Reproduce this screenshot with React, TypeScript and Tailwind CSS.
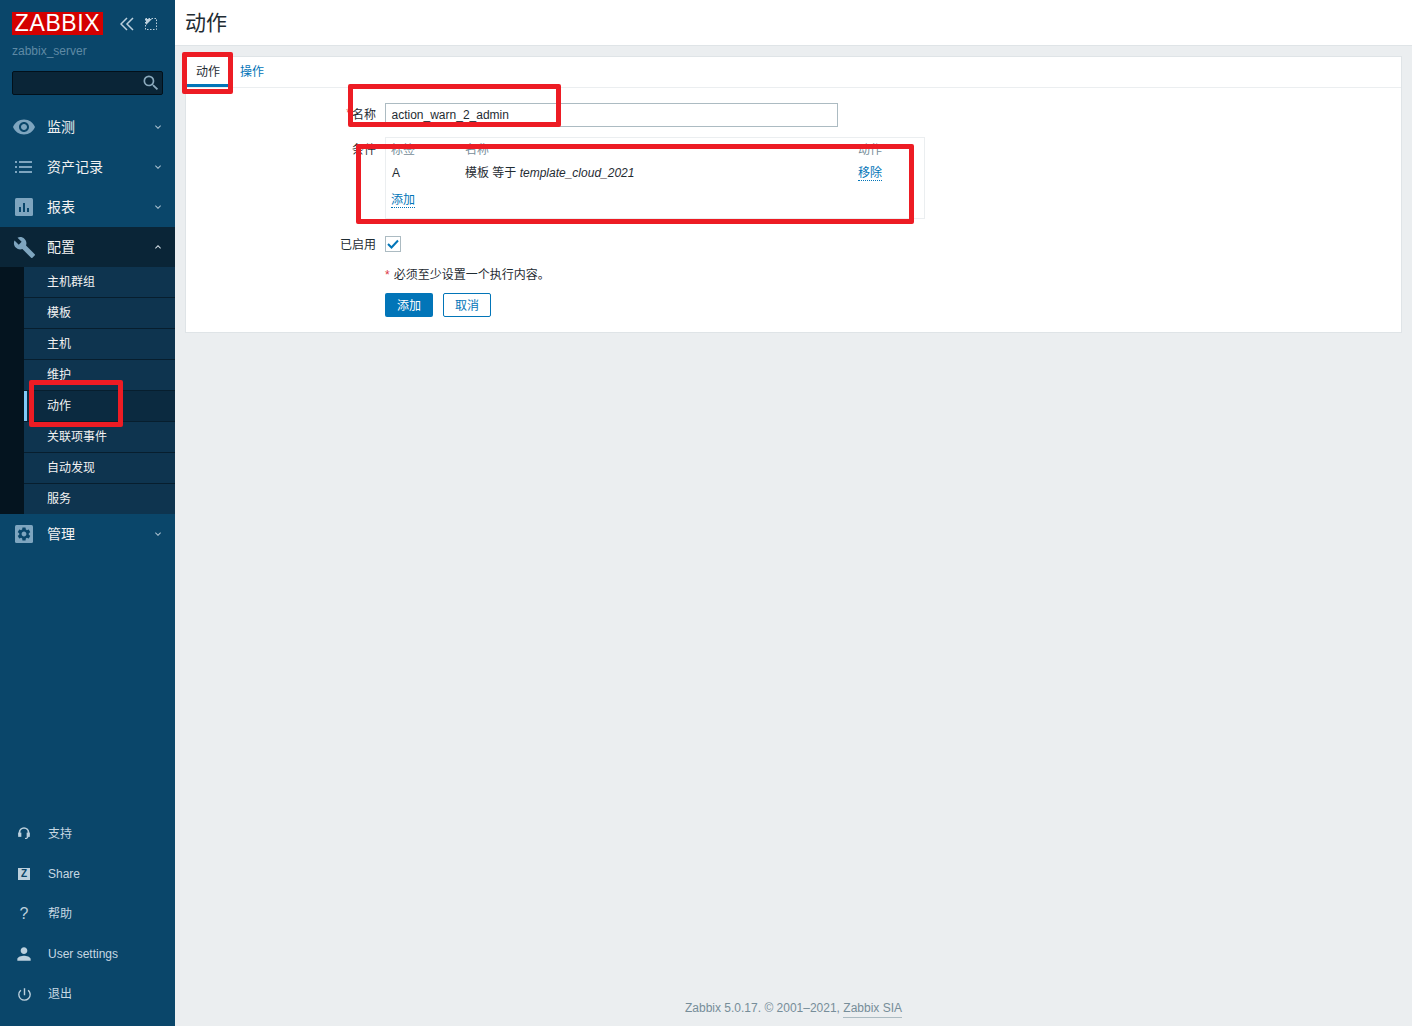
import React from "react";
import { MdVisibility, MdBuild, MdPerson, MdPowerSettingsNew, MdSettings, MdSearch, MdKeyboardArrowDown, MdKeyboardArrowUp } from "react-icons/md";

const font = "font-['Liberation_Sans','Noto_Sans_CJK_SC',sans-serif]";

function Top({ icon, label, open }: { icon: React.ReactNode; label: string; open?: boolean }) {
  return (
    <div className={`flex h-10 items-center pl-[12px] pr-[11px] ${open ? "bg-[#0a2537]" : ""}`}>
      <div className="flex w-[24px] justify-center text-[#7ea5bf]">{icon}</div>
      <span className="ml-[11px] flex-1 text-[14px] text-[#f2f2f2]">{label}</span>
      {open ? <MdKeyboardArrowUp size={12} className="text-[#d5e0e7]" /> : <MdKeyboardArrowDown size={12} className="text-[#a9c0cf]" />}
    </div>
  );
}

function Bottom({ icon, label }: { icon: React.ReactNode; label: string }) {
  return (
    <div className="flex h-10 items-center pl-[12px]">
      <div className="flex w-[24px] justify-center text-[#bcd0dd]">{icon}</div>
      <span className="ml-[12px] text-[12px] text-[#c7d8e3]">{label}</span>
    </div>
  );
}

const ListIcon = () => (
  <svg width="20" height="14" viewBox="0 0 20 14" fill="currentColor">
    <rect x="1" y="1" width="2" height="2" /><rect x="5" y="1" width="13" height="2" />
    <rect x="1" y="6" width="2" height="2" /><rect x="5" y="6" width="13" height="2" />
    <rect x="1" y="11" width="2" height="2" /><rect x="5" y="11" width="13" height="2" />
  </svg>
);
const ReportIcon = () => (
  <svg width="18" height="18" viewBox="0 0 18 18">
    <rect width="18" height="18" rx="1.5" fill="currentColor" />
    <rect x="4" y="9" width="2" height="5" fill="#0a466a" /><rect x="8" y="5" width="2" height="9" fill="#0a466a" /><rect x="12" y="10" width="2" height="4" fill="#0a466a" />
  </svg>
);
const HeadIcon = () => (
  <svg width="12" height="13" viewBox="0 0 12 13" fill="none" stroke="currentColor" strokeWidth="1.7" className="-translate-y-[1px]">
    <path d="M1.5 8V5.5a4.5 4.5 0 0 1 9 0V8" />
    <rect x="1" y="6.5" width="1.5" height="2.5" fill="currentColor" />
    <rect x="9.5" y="6.5" width="1.5" height="2.5" fill="currentColor" />
    <path d="M10 9c0 1.5-1 2.5-3 2.5" strokeWidth="1.2" />
  </svg>
);
const ShareIcon = () => (
  <div className="flex h-[12px] w-[12px] items-center justify-center bg-[#bcd0dd] text-[10px] font-bold leading-none text-[#0a466a]">Z</div>
);

const Red = ({ className }: { className: string }) => (
  <div className={`pointer-events-none absolute rounded-[2px] border-[5px] border-[#ed1c24] ${className}`} />
);

export default function App() {
  const subs = ["主机群组", "模板", "主机", "维护", "动作", "关联项事件", "自动发现", "服务"];
  return (
    <div className={`relative flex h-[1026px] w-[1412px] overflow-hidden bg-[#ebeef0] ${font}`}>
      <aside className="flex w-[175px] shrink-0 flex-col bg-[#0a466a]">
        <div className="flex items-center pl-[12px] pt-[12px]">
          <div className="flex h-[23px] w-[91px] items-center justify-center bg-[#d40000] text-[23px] leading-none tracking-[0.6px] text-white">ZABBIX</div>
          <svg width="14" height="14" viewBox="0 0 14 14" fill="none" stroke="#bcd0dd" strokeWidth="1.5" className="ml-[17px]">
            <path d="M7 1 1 7l6 6M13 1 7 7l6 6" />
          </svg>
          <svg width="12" height="12" viewBox="0 0 12 12" fill="none" stroke="#bcd0dd" className="ml-[11px]">
            <rect x="0.5" y="0.5" width="11" height="11" strokeDasharray="1.5 1.5" />
            <path d="M1 1h6L1 7z" fill="#bcd0dd" stroke="none" />
          </svg>
        </div>
        <div className="mt-[9px] pl-[12px] text-[12px] leading-[14px] text-[#5f8aa5]">zabbix_server</div>
        <div className="mx-[12px] mt-[13px] flex h-[24px] items-center justify-end rounded-[2px] border border-[#02101a] bg-[#0a2537] pr-[1px] text-[#8aa9bc]">
          <MdSearch size={20} />
        </div>
        <div className="mt-[12px]">
          <Top icon={<MdVisibility size={24} />} label="监测" />
          <Top icon={<ListIcon />} label="资产记录" />
          <Top icon={<ReportIcon />} label="报表" />
          <Top icon={<MdBuild size={23} />} label="配置" open />
          <div className="flex h-[247px] bg-[#04141f] pl-[24px]">
            <div className="flex-1">
              {subs.map((s, i) => (
                <div
                  key={s}
                  className={`flex items-center pl-[23px] text-[12px] text-[#f2f2f2] ${i < 7 ? "h-[31px] border-b border-[#071e2e]" : "h-[30px]"} ${s === "动作" ? "relative bg-[#0b2a40]" : "bg-[#0e344f]"}`}
                >
                  {s === "动作" && <div className="absolute bottom-0 left-0 top-0 w-[3px] bg-[#7fc8f7]" />}
                  {s}
                </div>
              ))}
            </div>
          </div>
          <Top
            icon={
              <div className="flex h-[18px] w-[18px] items-center justify-center rounded-[1.5px] bg-[#7ea5bf] text-[#0a466a]">
                <MdSettings size={16} />
              </div>
            }
            label="管理"
          />
        </div>
        <div className="mt-auto pb-[12px]">
          <Bottom icon={<HeadIcon />} label="支持" />
          <Bottom icon={<ShareIcon />} label="Share" />
          <Bottom icon={<span className="text-[16px] leading-none">?</span>} label="帮助" />
          <Bottom icon={<MdPerson size={20} />} label="User settings" />
          <Bottom icon={<MdPowerSettingsNew size={17} />} label="退出" />
        </div>
      </aside>

      <main className="flex min-w-0 flex-1 flex-col">
        <header className="flex h-[46px] shrink-0 items-center border-b border-[#dfe4e7] bg-white pl-[10px] text-[21px] text-[#1f2c33]">动作</header>
        <section className="ml-[10px] mr-[10px] mt-[10px] h-[277px] border border-[#dfe4e7] bg-white">
          <div className="flex h-[31px] items-stretch border-b border-[#ebeef0] pl-0 text-[12px]">
            <div className="flex w-[46px] items-center justify-center border-b-[3px] border-[#0275b8] pr-[2px] pt-[3px] text-[#1f2c33]">动作</div>
            <div className="ml-[8px] flex items-center text-[#0275b8]">操作</div>
          </div>
          <div className="grid grid-cols-[190px_1fr] gap-x-[9px] pt-[15px] text-[12px] text-[#1f2c33]">
            <div className="flex h-[24px] items-center justify-end"><span className="mr-[1px] -translate-y-[2px] text-[#dc3545]">*</span>名称</div>
            <div className="flex h-[24px] w-[453px] items-center border border-[#acbbc2] px-[5.5px]">action_warn_2_admin</div>

            <div className="mt-[10px] pt-[6px] text-right leading-[14px]">条件</div>
            <div className="mt-[10px] h-[82px] w-[540px] border border-[#ebeef0] pl-[5px] pt-[5px]">
              <div className="grid grid-cols-[74px_393px_1fr] leading-[14px] text-[#768d99]">
                <span>标签</span><span>名称</span><span>动作</span>
              </div>
              <div className="mt-[9px] grid grid-cols-[74px_393px_1fr] leading-[14px]">
                <span className="pl-[1px]">A</span>
                <span>模板 等于 <i>template_cloud_2021</i></span>
                <span className="justify-self-start border-b border-dotted border-[#0275b8] text-[#0275b8]">移除</span>
              </div>
              <div className="mt-[12px] leading-[14px]">
                <span className="inline-block border-b border-dotted border-[#0275b8] text-[#0275b8]">添加</span>
              </div>
            </div>

            <div className="mt-[17px] flex h-[16px] items-center justify-end pt-[1px]">已启用</div>
            <div className="mt-[17px] flex h-[16px] w-[16px] items-center justify-center border border-[#acbbc2] text-[#0275b8]">
              <svg width="12" height="10" viewBox="0 0 12 10" fill="none" stroke="currentColor" strokeWidth="2"><path d="M1 5l3.5 3.5L11 1.5" /></svg>
            </div>

            <div />
            <div className="mt-[16px] leading-[14px]"><span className="mr-[4px] font-normal text-[#dc3545]">*</span>必须至少设置一个执行内容。</div>

            <div />
            <div className="mt-[11px] flex gap-[10px]">
              <div className="flex h-[24px] w-[48px] items-center justify-center rounded-[2px] bg-[#0275b8] pt-[1px] text-white">添加</div>
              <div className="flex h-[24px] w-[48px] items-center justify-center rounded-[2px] border border-[#0275b8] pt-[1px] text-[#0275b8]">取消</div>
            </div>
          </div>
        </section>
        <footer className="mt-auto flex h-[36px] items-center justify-center pr-[1px] pl-[1px] text-[12px] text-[#768d99]">
          Zabbix 5.0.17. © 2001–2021,&nbsp;<span className="border-b border-[#acbbc2]">Zabbix SIA</span>
        </footer>
      </main>

      <Red className="left-[182px] top-[52px] h-[42px] w-[51px]" />
      <Red className="left-[348px] top-[84px] h-[43px] w-[213px]" />
      <Red className="left-[356px] top-[144px] h-[80px] w-[558px]" />
      <Red className="left-[29px] top-[380px] h-[47px] w-[94px]" />
    </div>
  );
}
